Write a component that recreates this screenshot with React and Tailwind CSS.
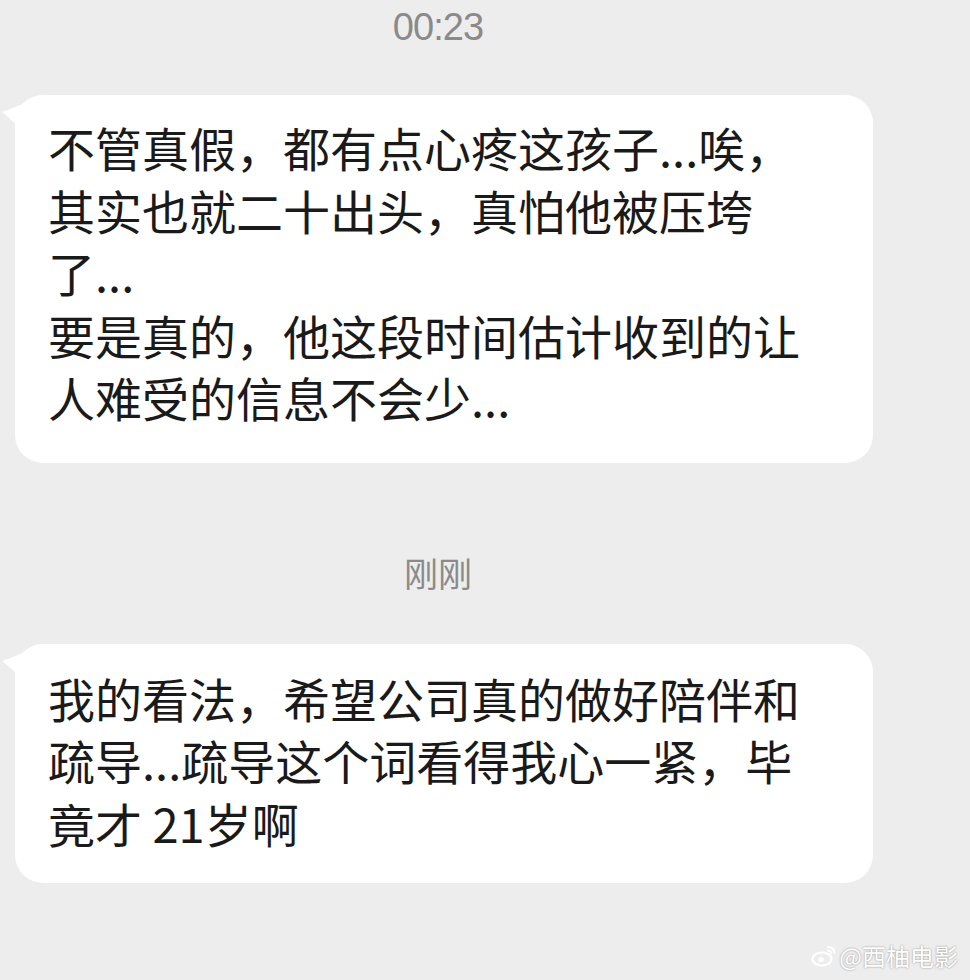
import React from "react";

const cjk = { fontFamily: '"Noto Sans CJK SC", "Noto Sans", sans-serif' };

const firstLines = [
  "不管真假，都有点心疼这孩子...唉，",
  "其实也就二十出头，真怕他被压垮",
  "了...",
  "要是真的，他这段时间估计收到的让",
  "人难受的信息不会少...",
];

const secondLines = [
  "我的看法，希望公司真的做好陪伴和",
  "疏导...疏导这个词看得我心一紧，毕",
  "竟才 21岁啊",
];

const Tail = () => (
  <svg
    className="absolute left-[-14px] top-[6px]"
    width="24"
    height="34"
    viewBox="0 0 24 34"
  >
    <path d="M24 2 Q10 8 1 11 Q10 18 24 32 Z" fill="#ffffff" />
  </svg>
);

const Bubble = ({ lines, className }) => (
  <div
    className={`relative ml-[15px] w-[858px] rounded-[28px] bg-white pl-[33px] text-[47px] leading-[62.5px] text-[#1a1a1a] ${className}`}
    style={cjk}
  >
    <Tail />
    {lines.map((line) => (
      <div key={line} className="whitespace-nowrap">
        {line}
      </div>
    ))}
  </div>
);

const App = () => {
  return (
    <div className="relative h-[980px] w-[970px] overflow-hidden bg-[#ededed]">
      <div
        className="w-[876px] pt-[8px] text-center text-[38px] leading-[38px] tracking-tight text-[#8a8a8a]"
        style={{ fontFamily: '"Liberation Sans", Arial, sans-serif' }}
      >
        00:23
      </div>

      <Bubble lines={firstLines} className="mt-[49px] pt-[21px] pb-[34px]" />

      <div
        className="mt-[93px] w-[876px] text-center text-[34px] leading-[34px] text-[#8a8a8a]"
        style={cjk}
      >
        刚刚
      </div>

      <Bubble lines={secondLines} className="mt-[54px] pt-[23px] pb-[29px]" />

      {/* watermark */}
      <div className="absolute bottom-[10px] right-[12px] flex items-center gap-[2px]">
        <svg width="26" height="24" viewBox="0 0 26 24">
          <ellipse cx="11" cy="15" rx="9.5" ry="6.5" fill="none" stroke="#ffffff" strokeWidth="2.2" />
          <circle cx="10" cy="15.5" r="2.6" fill="#ffffff" />
          <path d="M17 3 Q23 3 23.5 9" fill="none" stroke="#ffffff" strokeWidth="2" strokeLinecap="round" />
          <path d="M17 6.5 Q20 6.5 20.3 9.5" fill="none" stroke="#ffffff" strokeWidth="1.8" strokeLinecap="round" />
        </svg>
        <span
          className="text-[24px] leading-[28px] text-white [text-shadow:0_0_2px_rgba(0,0,0,0.45)]"
          style={cjk}
        >
          @西柚电影
        </span>
      </div>
    </div>
  );
};

export default App;
